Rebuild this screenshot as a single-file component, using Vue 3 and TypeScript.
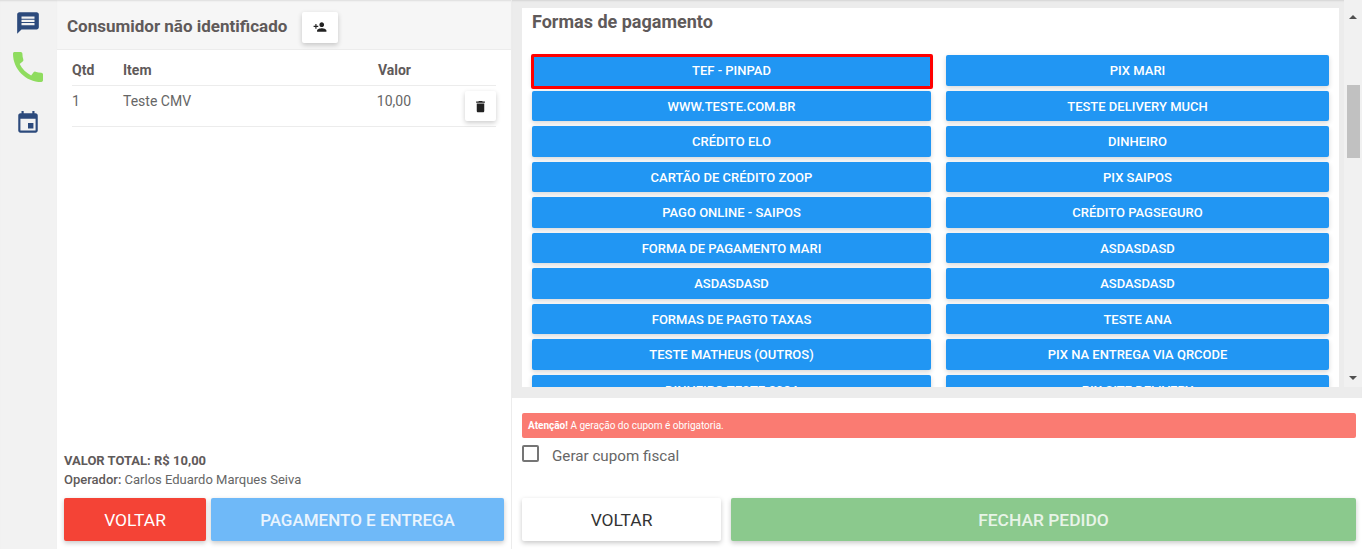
<script setup lang="ts">
const leftPayments = [
  'TEF - PINPAD',
  'WWW.TESTE.COM.BR',
  'CRÉDITO ELO',
  'CARTÃO DE CRÉDITO ZOOP',
  'PAGO ONLINE - SAIPOS',
  'FORMA DE PAGAMENTO MARI',
  'ASDASDASD',
  'FORMAS DE PAGTO TAXAS',
  'TESTE MATHEUS (OUTROS)',
  'DINHEIRO TESTE 2024',
]

const rightPayments = [
  'PIX MARI',
  'TESTE DELIVERY MUCH',
  'DINHEIRO',
  'PIX SAIPOS',
  'CRÉDITO PAGSEGURO',
  'ASDASDASD',
  'ASDASDASD',
  'TESTE ANA',
  'PIX NA ENTREGA VIA QRCODE',
  'PIX SITE DELIVERY',
]
</script>

<template>
  <div class="page">
    <nav class="rail">
      <svg class="ico-msg" viewBox="0 0 24 24"><path d="M20 2H4c-1.1 0-1.99.9-1.99 2L2 22l4-4h14c1.1 0 2-.9 2-2V4c0-1.1-.9-2-2-2zm-2 12H6v-2h12v2zm0-3H6V9h12v2zm0-3H6V6h12v2z" /></svg>
      <svg class="ico-call" viewBox="0 0 24 24"><path d="M20.01 15.38c-1.23 0-2.42-.2-3.53-.56-.35-.12-.74-.03-1.01.24l-1.57 1.97c-2.83-1.35-5.48-3.9-6.89-6.83l1.95-1.66c.27-.28.35-.67.24-1.02-.37-1.11-.56-2.3-.56-3.53 0-.54-.45-.99-.99-.99H4.19C3.65 3 3 3.24 3 3.99 3 13.28 10.73 21 20.01 21c.71 0 .99-.63.99-1.18v-3.45c0-.54-.45-.99-.99-.99z" /></svg>
      <svg class="ico-event" viewBox="0 0 24 24"><path d="M17 12h-5v5h5v-5zM16 1v2H8V1H6v2H5c-1.11 0-1.99.9-1.99 2L3 19c0 1.1.89 2 2 2h14c1.1 0 2-.9 2-2V5c0-1.1-.9-2-2-2h-1V1h-2zm3 18H5V8h14v11z" /></svg>
    </nav>

    <section class="order">
      <header class="order-head">
        <h2>Consumidor não identificado</h2>
        <button class="icon-btn add-btn" type="button">
          <svg viewBox="0 0 24 24"><path d="M15 12c2.21 0 4-1.79 4-4s-1.79-4-4-4-4 1.79-4 4 1.79 4 4 4zm-9-2V7H4v3H1v2h3v3h2v-3h3v-2H6zm9 4c-2.67 0-8 1.34-8 4v2h16v-2c0-2.66-5.33-4-8-4z" /></svg>
        </button>
      </header>

      <div class="items">
        <div class="item-row item-head">
          <span class="c-qtd">Qtd</span>
          <span class="c-item">Item</span>
          <span class="c-val">Valor</span>
        </div>
        <div class="item-row item-line">
          <span class="c-qtd">1</span>
          <span class="c-item">Teste CMV</span>
          <span class="c-val">10,00</span>
          <button class="icon-btn del-btn" type="button">
            <svg viewBox="0 0 24 24"><path d="M6 19c0 1.1.9 2 2 2h8c1.1 0 2-.9 2-2V7H6v12zM19 4h-3.5l-1-1h-5l-1 1H5v2h14V4z" /></svg>
          </button>
        </div>
      </div>

      <div class="order-foot">
        <div class="total">VALOR TOTAL: R$ 10,00</div>
        <div class="operator"><b>Operador:</b> Carlos Eduardo Marques Seiva</div>
        <div class="actions">
          <button class="big red" type="button">VOLTAR</button>
          <button class="big light-blue" type="button">PAGAMENTO E ENTREGA</button>
        </div>
      </div>
    </section>

    <section class="pay">
      <div class="pay-top">
        <div class="pay-card">
          <h2>Formas de pagamento</h2>
          <div class="pay-grid">
            <div class="pay-col col-a">
              <button
                v-for="(name, i) in leftPayments"
                :key="i"
                class="pay-btn"
                :class="{ selected: i === 0 }"
                type="button"
              >{{ name }}</button>
            </div>
            <div class="pay-col col-b">
              <button
                v-for="(name, i) in rightPayments"
                :key="i"
                class="pay-btn"
                type="button"
              >{{ name }}</button>
            </div>
          </div>
        </div>
        <div class="scrollbar">
          <span class="arrow up"></span>
          <div class="thumb"></div>
          <span class="arrow down"></span>
        </div>
      </div>

      <div class="pay-bottom">
        <div class="alert"><b>Atenção!</b> A geração do cupom é obrigatoria.</div>
        <label class="check">
          <span class="box"></span>
          <span class="check-text">Gerar cupom fiscal</span>
        </label>
        <div class="actions pay-actions">
          <button class="big white" type="button">VOLTAR</button>
          <button class="big green" type="button">FECHAR PEDIDO</button>
        </div>
      </div>
    </section>
  </div>
</template>

<style>
html,
body {
  margin: 0;
  overflow: hidden;
}
</style>

<style scoped>
.page {
  display: flex;
  width: 1362px;
  height: 549px;
  overflow: hidden;
  background: #fff;
  font-family: Roboto, "Liberation Sans", sans-serif;
  color: #5f5a5a;
}

button {
  font-family: inherit;
  border: 0;
  cursor: pointer;
}

.rail {
  width: 57px;
  flex: none;
  display: flex;
  flex-direction: column;
  align-items: center;
  padding-right: 1px;
  box-sizing: border-box;
  background: #f2f2f2;
  box-shadow: inset 0 2px 2px -1px rgba(0, 0, 0, 0.1);
}

.rail svg {
  display: block;
  flex: none;
}

.ico-msg {
  width: 26px;
  height: 26px;
  margin-top: 10px;
  fill: #2c4a7c;
}

.ico-call {
  width: 40px;
  height: 40px;
  margin-top: 11px;
  fill: #8fdc5f;
}

.ico-event {
  width: 26px;
  height: 26px;
  margin-top: 23px;
  fill: #2c4a7c;
}

.order {
  width: 455px;
  flex: none;
  display: flex;
  flex-direction: column;
  border-right: 1px solid #ececec;
  box-sizing: border-box;
}

.order-head {
  height: 50px;
  flex: none;
  display: flex;
  align-items: center;
  gap: 15px;
  padding: 5px 0 0 10px;
  box-sizing: border-box;
  background: #f6f6f6;
  border-bottom: 1px solid #ececec;
  box-shadow: inset 0 2px 2px -1px rgba(0, 0, 0, 0.1);
}

.order-head h2 {
  margin: -2px 0 0;
  font-size: 17px;
  font-weight: 700;
  color: #5f5a5a;
}

.icon-btn {
  display: flex;
  align-items: center;
  justify-content: center;
  padding: 0;
  background: #fff;
  border-radius: 2px;
  box-shadow: 0 2px 5px rgba(0, 0, 0, 0.2);
}

.add-btn {
  width: 36px;
  height: 31px;
}

.add-btn svg {
  width: 14px;
  height: 14px;
  fill: #222;
}

.del-btn {
  width: 31px;
  height: 30px;
  margin-top: 5px;
  margin-left: auto;
}

.del-btn svg {
  width: 15px;
  height: 15px;
  fill: #222;
}

.items {
  padding: 0 15px;
  font-size: 14px;
}

.item-row {
  display: flex;
  border-bottom: 1px solid #ececec;
  box-sizing: border-box;
}

.item-head {
  height: 36px;
  padding-top: 4px;
  align-items: center;
  font-weight: 700;
  font-size: 14px;
}

.item-line {
  height: 41px;
  line-height: 30px;
  color: #666;
}

.item-line span {
  height: 30px;
}

.c-qtd {
  width: 51px;
}

.c-item {
  width: 206px;
}

.c-val {
  width: 82px;
  flex: none;
  text-align: right;
}

.order-foot {
  margin-top: auto;
  padding: 0 7px 8px;
}

.total {
  font-size: 13px;
  font-weight: 700;
  line-height: 18px;
}

.operator {
  font-size: 13px;
  line-height: 18px;
  margin-top: 1px;
  color: #666;
}

.operator b {
  font-weight: 500;
  color: #5f5a5a;
}

.actions {
  display: flex;
  gap: 5px;
  margin-top: 9px;
}

.big {
  height: 43px;
  padding: 0;
  border-radius: 2px;
  font-size: 17.4px;
  box-shadow: 0 2px 5px rgba(0, 0, 0, 0.22);
}

.red {
  width: 142px;
  background: #f44336;
  color: #fff;
}

.light-blue {
  width: 293px;
  background: #6fb9f8;
  color: #e9f4fe;
  font-size: 17px;
  font-weight: 500;
}

.pay {
  flex: 1;
  display: flex;
  flex-direction: column;
  min-width: 0;
}

.pay-top {
  height: 398px;
  flex: none;
  display: flex;
  box-sizing: border-box;
  padding: 8px 0 11px 10px;
  background: #ececec;
  box-shadow: inset 0 2px 2px -1px rgba(0, 0, 0, 0.1);
}

.pay-card {
  width: 817px;
  flex: none;
  background: #fff;
  overflow: hidden;
}

.pay-card h2 {
  margin: 0;
  padding-left: 10px;
  height: 47.2px;
  font-size: 18px;
  line-height: 27px;
  font-weight: 700;
  color: #5f5a5a;
}

.pay-grid {
  display: flex;
  gap: 15px;
  padding-left: 10px;
}

.pay-col {
  display: flex;
  flex-direction: column;
  gap: 5px;
}

.col-a {
  width: 399px;
}

.col-b {
  width: 383px;
}

.pay-btn {
  position: relative;
  height: 30.5px;
  flex: none;
  padding: 1px 0 0;
  background: #2196f3;
  color: #fff;
  font-size: 13px;
  font-weight: 500;
  border-radius: 2px;
  box-shadow: 0 2px 5px rgba(0, 0, 0, 0.16);
}

.pay-btn.selected::after {
  content: "";
  position: absolute;
  top: -1px;
  left: -1px;
  right: -2px;
  bottom: -3px;
  border: 3px solid #f00;
  border-radius: 2px;
}

.scrollbar {
  width: 18px;
  flex: none;
  margin-left: 5px;
  display: flex;
  flex-direction: column;
  align-items: center;
  background: #f1f1f1;
  position: relative;
  margin-top: -8px;
}

.arrow {
  position: absolute;
  left: 5px;
  width: 0;
  height: 0;
  border-left: 4px solid transparent;
  border-right: 4px solid transparent;
}

.arrow.up {
  top: 15px;
  border-bottom: 4px solid #505050;
}

.arrow.down {
  bottom: 7px;
  border-top: 4px solid #505050;
}

.thumb {
  width: 13px;
  height: 73px;
  margin-top: 85px;
  background: #c1c1c1;
}

.pay-bottom {
  flex: 1;
  padding: 15px 6px 0 10px;
  min-height: 0;
}

.alert {
  height: 25px;
  line-height: 26px;
  padding-left: 6px;
  background: #fa7b72;
  color: #fff;
  font-size: 10px;
  border-radius: 2px;
}

.alert b {
  font-weight: 700;
}

.check {
  display: flex;
  align-items: center;
  gap: 13px;
  margin-top: 7px;
  font-size: 15.2px;
  color: #666;
  height: 17px;
}

.check-text {
  margin-top: 4px;
}

.box {
  width: 13px;
  height: 13px;
  flex: none;
  border: 2px solid #757575;
  border-radius: 2px;
}

.pay-actions {
  gap: 10px;
  margin-top: 36px;
}

.white {
  width: 199px;
  background: #fff;
  color: #333;
}

.green {
  width: 625px;
  background: #8bc98d;
  color: #e8f4e8;
  font-weight: 500;
}
</style>
